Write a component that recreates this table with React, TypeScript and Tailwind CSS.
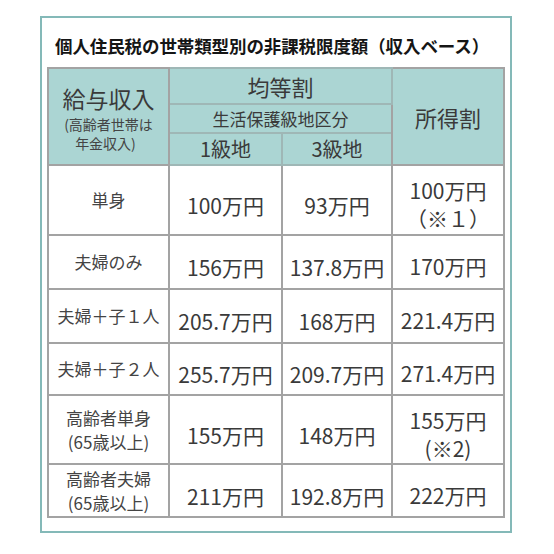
import React from "react"

type Row = {
  label: string[]
  h: string
  a: string
  b: string
  c: string[]
}

const rows: Row[] = [
  { label: ["単身"], h: "h-[70px]", a: "100万円", b: "93万円", c: ["100万円", "（※１）"] },
  { label: ["夫婦のみ"], h: "h-[54px]", a: "156万円", b: "137.8万円", c: ["170万円"] },
  { label: ["夫婦＋子１人"], h: "h-[54px]", a: "205.7万円", b: "168万円", c: ["221.4万円"] },
  { label: ["夫婦＋子２人"], h: "h-[52px]", a: "255.7万円", b: "209.7万円", c: ["271.4万円"] },
  { label: ["高齢者単身", "(65歳以上)"], h: "h-[69px]", a: "155万円", b: "148万円", c: ["155万円", "(※2)"] },
  { label: ["高齢者夫婦", "(65歳以上)"], h: "h-[53px]", a: "211万円", b: "192.8万円", c: ["222万円"] },
]

const cell = "border-2 border-[#a3a3a3] text-center align-middle p-0"
const head = "border-2 border-[#9fb7b6] bg-[#abd5d3] text-center align-middle p-0 font-normal"

function App() {
  return (
    <div className="w-[554px] h-[554px] bg-white pt-[16px] pl-[40px] font-['Noto_Sans_CJK_JP',sans-serif] text-[#3a3a3a]">
      <div className="w-[472px] h-[517px] border-2 border-[#84b9b8] bg-white">
        <div className="h-[49px] flex items-center pt-[8px] pl-[13px] text-[17.5px] font-bold text-[#151515] tracking-[-0.1px]">
          個人住民税の世帯類型別の非課税限度額（収入ベース）
        </div>
        <table className="ml-[5px] w-[456px] border-collapse table-fixed border-2 border-[#a3a3a3]">
          <colgroup>
            <col className="w-[121px]" />
            <col className="w-[113px]" />
            <col className="w-[110px]" />
            <col className="w-[112px]" />
          </colgroup>
          <thead>
            <tr className="h-[36px]">
              <th rowSpan={3} className={`${head} border-[#a3a3a3]`}>
                <div className="text-[23px] leading-[34px]">給与収入</div>
                <div className="text-[14px] leading-[19px] text-[#444]">(高齢者世帯は</div>
                <div className="text-[14px] leading-[19px] text-[#444] pr-[6px]">年金収入)</div>
              </th>
              <th colSpan={2} className={`${head} text-[22px] leading-[30px]`}>均等割</th>
              <th rowSpan={3} className={`${head} border-[#a3a3a3] text-[22px] leading-[30px]`}>所得割</th>
            </tr>
            <tr className="h-[29px]">
              <th colSpan={2} className={`${head} text-[17px] leading-[24px]`}>生活保護級地区分</th>
            </tr>
            <tr className="h-[32px]">
              <th className={`${head} text-[20px] leading-[28px]`}>1級地</th>
              <th className={`${head} text-[20px] leading-[28px]`}>3級地</th>
            </tr>
          </thead>
          <tbody>
            {rows.map((r) => (
              <tr key={r.label.join("")} className={r.h}>
                <td className={`${cell} text-[17px] leading-[24px] text-[#444]`}>
                  {r.label.map((l) => (
                    <div key={l}>{l}</div>
                  ))}
                </td>
                <td className={`${cell} pt-[10px] text-[21px] leading-[28px]`}>{r.a}</td>
                <td className={`${cell} pt-[10px] text-[21px] leading-[28px]`}>{r.b}</td>
                <td className={`${cell} pt-[8px] text-[21px] leading-[28px]`}>
                  {r.c.map((l) => (
                    <div key={l}>{l}</div>
                  ))}
                </td>
              </tr>
            ))}
          </tbody>
        </table>
      </div>
    </div>
  )
}

export default App
